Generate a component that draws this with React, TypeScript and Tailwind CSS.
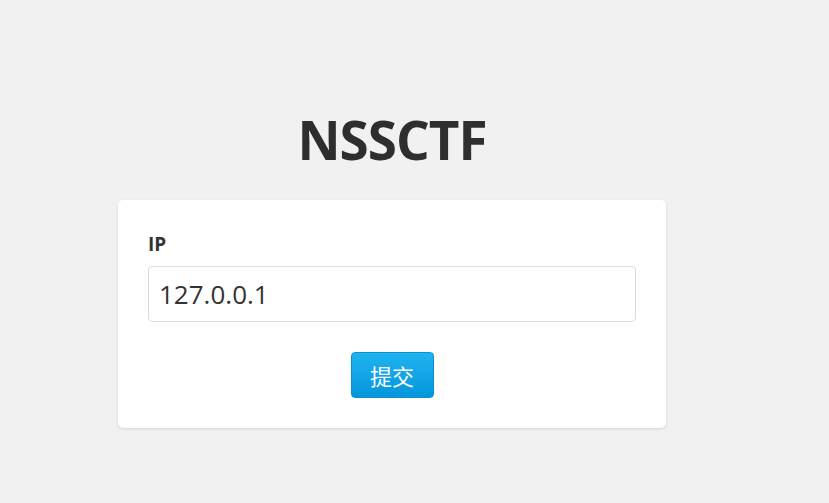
import React from 'react'

export default function App() {
  return (
    <div
      className="min-h-[503px] w-full bg-[#f1f1f1] flex flex-col items-center text-[#333]"
      style={{ fontFamily: '"Open Sans", "Noto Sans CJK SC", sans-serif' }}
    >
      <div className="w-[548px] ml-[-45px] flex flex-col">
        <h1 className="mt-[106px] h-[68px] text-center text-[53px] leading-[68px] font-bold text-[#2e2e2e] tracking-[-1px]">
          NSSCTF
        </h1>
        <div className="mt-[26px] bg-white rounded-[5px] shadow-[0_1px_3px_rgba(0,0,0,0.12)] px-[30px] pt-[33px] pb-[30px]">
          <label className="block text-[19px] font-bold leading-[22px] text-[#333]">IP</label>
          <input
            defaultValue="127.0.0.1"
            className="mt-[11px] w-full h-[56px] border border-[#dcdcdc] rounded-[4px] px-[10px] text-[26px] text-[#333] outline-none"
          />
          <div className="mt-[30px] flex justify-center">
            <button
              className="w-[83px] h-[46px] rounded-[4px] border border-[#0a8fd0] bg-gradient-to-b from-[#1fb3f0] to-[#0396dc] text-white text-[22px] leading-none"
              style={{ fontFamily: '"Noto Sans CJK SC", sans-serif' }}
            >
              提交
            </button>
          </div>
        </div>
      </div>
    </div>
  )
}
